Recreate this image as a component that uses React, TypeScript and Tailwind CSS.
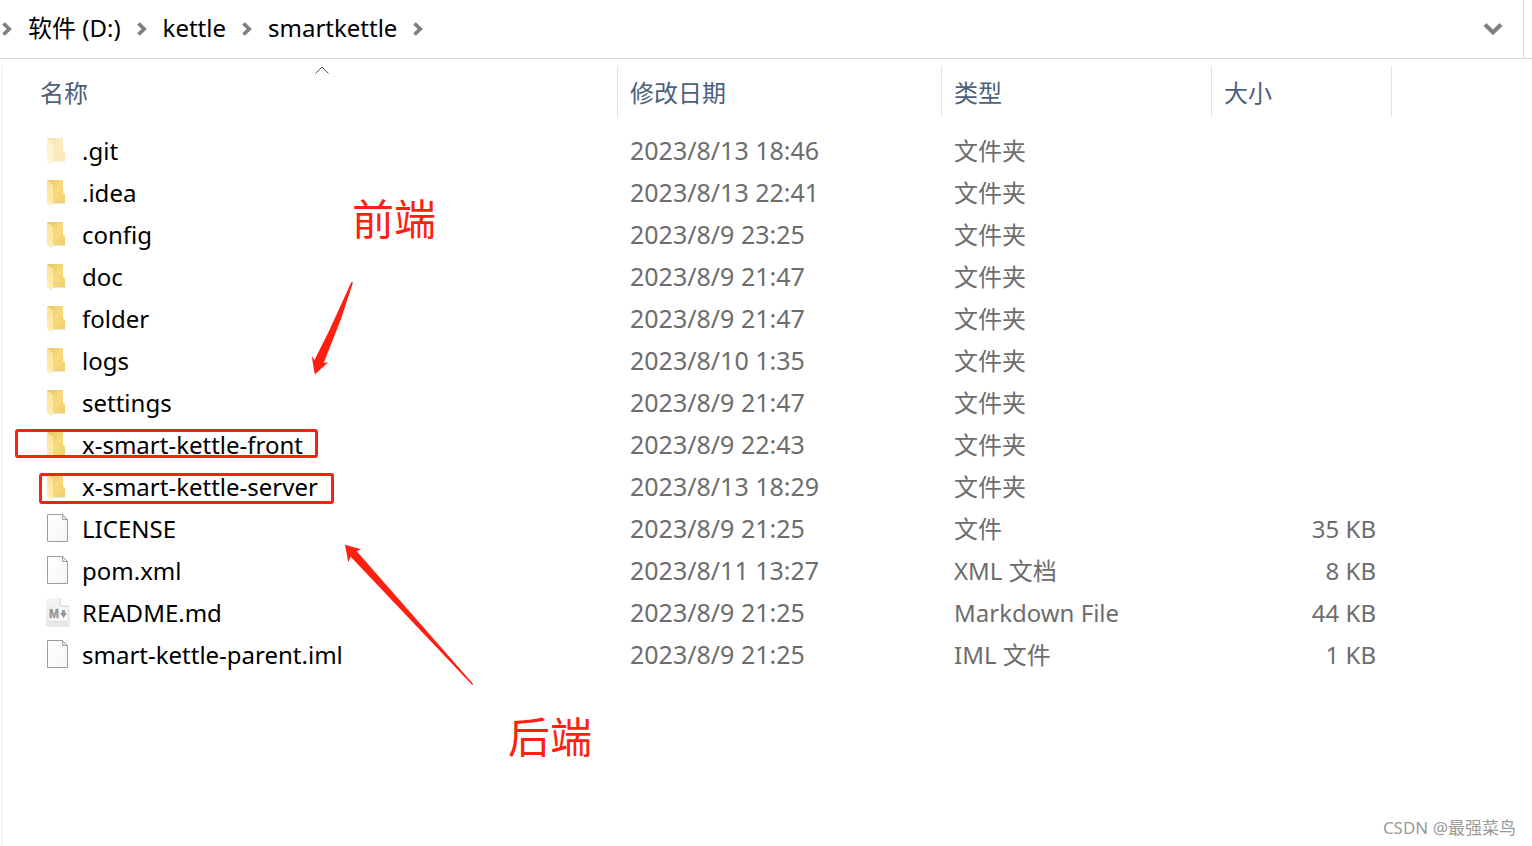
import React from 'react';

type IconKind = 'hidden-folder' | 'folder' | 'file' | 'markdown';

interface Entry {
  name: string;
  date: string;
  type: string;
  size?: string;
  icon: IconKind;
}

const PATH = ['软件 (D:)', 'kettle', 'smartkettle'];

const ENTRIES: Entry[] = [
  { name: '.git', date: '2023/8/13 18:46', type: '文件夹', icon: 'hidden-folder' },
  { name: '.idea', date: '2023/8/13 22:41', type: '文件夹', icon: 'folder' },
  { name: 'config', date: '2023/8/9 23:25', type: '文件夹', icon: 'folder' },
  { name: 'doc', date: '2023/8/9 21:47', type: '文件夹', icon: 'folder' },
  { name: 'folder', date: '2023/8/9 21:47', type: '文件夹', icon: 'folder' },
  { name: 'logs', date: '2023/8/10 1:35', type: '文件夹', icon: 'folder' },
  { name: 'settings', date: '2023/8/9 21:47', type: '文件夹', icon: 'folder' },
  { name: 'x-smart-kettle-front', date: '2023/8/9 22:43', type: '文件夹', icon: 'folder' },
  { name: 'x-smart-kettle-server', date: '2023/8/13 18:29', type: '文件夹', icon: 'folder' },
  { name: 'LICENSE', date: '2023/8/9 21:25', type: '文件', size: '35 KB', icon: 'file' },
  { name: 'pom.xml', date: '2023/8/11 13:27', type: 'XML 文档', size: '8 KB', icon: 'file' },
  { name: 'README.md', date: '2023/8/9 21:25', type: 'Markdown File', size: '44 KB', icon: 'markdown' },
  { name: 'smart-kettle-parent.iml', date: '2023/8/9 21:25', type: 'IML 文件', size: '1 KB', icon: 'file' }
];

const Chevron = () => (
  <svg viewBox="0 0 10 14" className="w-[10px] h-[14px] shrink-0" fill="none" stroke="#808080" strokeWidth="3.8" aria-hidden="true">
    <path d="M1.5 1.5 L7.2 7 L1.5 12.5" />
  </svg>
);

const FolderIcon = ({ faded }: { faded?: boolean }) => (
  <svg viewBox="0 0 24 30" className={`w-6 h-[30px] shrink-0 ${faded ? 'opacity-50' : ''}`} aria-hidden="true">
    <defs>
      <linearGradient id="folder-back" x1="0" y1="0" x2="1" y2="1">
        <stop offset="0" stopColor="#e9c45c" />
        <stop offset="0.5" stopColor="#f8da82" />
        <stop offset="1" stopColor="#f3ce69" />
      </linearGradient>
      <linearGradient id="folder-front" x1="0" y1="0" x2="0" y2="1">
        <stop offset="0" stopColor="#fce395" />
        <stop offset="1" stopColor="#ffedb3" />
      </linearGradient>
    </defs>
    <path d="M6 25 H20 L18 26 H6 Z" fill="#e6e6e6" />
    <path d="M1 2 H17 V15 H18 L19 17 V25 H1 Z" fill="url(#folder-back)" />
    <path d="M1 2 L7 7 V25 H6 V29 L1 25 Z" fill="url(#folder-front)" />
  </svg>
);

const FileIcon = () => (
  <svg viewBox="0 0 24 30" className="w-6 h-[30px] shrink-0" aria-hidden="true">
    <defs>
      <linearGradient id="sheet" x1="0" y1="0" x2="1" y2="1">
        <stop offset="0" stopColor="#ffffff" />
        <stop offset="1" stopColor="#f4f6f7" />
      </linearGradient>
    </defs>
    <path d="M1.5 0.5 H16.5 L21.5 5.5 V27.5 H1.5 Z" fill="url(#sheet)" stroke="#9a9c9e" />
    <path d="M16.5 0.5 V5.5 H21.5 Z" fill="#e9ecee" stroke="#9a9c9e" />
  </svg>
);

const MarkdownIcon = () => (
  <svg viewBox="0 0 24 30" className="w-6 h-[30px] shrink-0" aria-hidden="true">
    <defs>
      <linearGradient id="md-sheet" x1="0" y1="0" x2="0" y2="1">
        <stop offset="0" stopColor="#f6f6f6" />
        <stop offset="1" stopColor="#e6e6e6" />
      </linearGradient>
    </defs>
    <path d="M0 2 Q0 0 2 0 H14 L24 8 V27 Q24 29 22 29 H2 Q0 29 0 27 Z" fill="url(#md-sheet)" />
    <path d="M14 0 L23 8 H16 Q14 8 14 6 Z" fill="#ffffff" />
    <path d="M14 0 V6 Q14 8 16 8 H23" fill="none" stroke="#d0d0d0" />
    <rect x="3" y="10" width="18" height="14" fill="#f8f8f8" />
    <path d="M3 23.5 H21" stroke="#dcdcdc" />
    <text x="3" y="20" fontSize="12" fontWeight="700" fill="#969696" stroke="#969696" strokeWidth="0.4" fontFamily="Liberation Sans, sans-serif">M</text>
    <path d="M16 12 H19 V15 H21 L17.5 20 L14 15 H16 Z" fill="#969696" />
  </svg>
);

const EntryIcon = ({ kind }: { kind: IconKind }) => {
  if (kind === 'file') return <FileIcon />;
  if (kind === 'markdown') return <MarkdownIcon />;
  return <FolderIcon faded={kind === 'hidden-folder'} />;
};

const AddressBar = () => (
  <header className="flex h-[59px] border-b border-[#d9d9d9]">
    <div className="flex flex-1 items-center justify-between border-r border-[#d9d9d9] pl-0.5 pr-5">
      <nav aria-label="路径" className="flex items-center gap-4">
        <Chevron />
        {PATH.map(part => (
          <React.Fragment key={part}>
            <a href="#" className="whitespace-nowrap pb-0.5 text-black">{part}</a>
            <Chevron />
          </React.Fragment>
        ))}
      </nav>
      <button type="button" aria-label="以前的位置">
        <svg viewBox="0 0 20 14" className="w-5 h-[14px]" fill="none" stroke="#808080" strokeWidth="4">
          <path d="M2 2.5 L10 10.5 L18 2.5" />
        </svg>
      </button>
    </div>
    <div className="w-2" />
  </header>
);

const HEAD = 'h-[51px] border-r border-[#e2e2e2] pt-0.5 text-left font-normal text-[#4c607a]';

const FileTable = () => (
  <table className="w-full table-fixed border-separate border-spacing-0">
    <colgroup>
      <col className="w-[591px]" />
      <col className="w-[324px]" />
      <col className="w-[270px]" />
      <col className="w-[180px]" />
      <col />
    </colgroup>
    <thead>
      <tr>
        <th scope="col" aria-sort="ascending" className={`${HEAD} relative pl-[13px]`}>
          <svg viewBox="0 0 14 8" className="absolute left-1/2 top-0 w-[14px] h-2 -translate-x-1/2" fill="none" stroke="#555555" aria-hidden="true">
            <path d="M0.5 7.5 L7 1 L13.5 7.5" />
          </svg>
          名称
        </th>
        <th scope="col" className={`${HEAD} pl-3`}>修改日期</th>
        <th scope="col" className={`${HEAD} pl-3`}>类型</th>
        <th scope="col" className={`${HEAD} pl-3`}>大小</th>
        <td />
      </tr>
    </thead>
    <tbody className="text-[#6d6d6d] before:block before:h-[13px]">
      {ENTRIES.map(entry => (
        <tr key={entry.name} className="h-[42px] whitespace-nowrap">
          <td className="pl-[19px]">
            <div className="flex items-center gap-3 text-black">
              <EntryIcon kind={entry.icon} />
              {entry.name}
            </div>
          </td>
          <td className="pb-0.5 pl-3 text-[25px]">{entry.date}</td>
          <td className="pl-3">{entry.type}</td>
          <td className="pr-4 text-right">{entry.size}</td>
          <td />
        </tr>
      ))}
    </tbody>
  </table>
);

// Red marks drawn over the list
const Annotations = () => (
  <div className="pointer-events-none absolute inset-0 text-[42px] leading-[48px] text-[#ff1f10]">
    <div className="absolute left-[15px] top-[370px] h-[29px] w-[303px] rounded-[3px] border-3 border-[#ff1f10]" />
    <div className="absolute left-[39px] top-[414px] h-[31px] w-[295px] rounded-[3px] border-3 border-[#ff1f10]" />
    <span className="absolute left-[352px] top-[136px]">前端</span>
    <span className="absolute left-[508px] top-[654px]">后端</span>
    <svg viewBox="0 0 44 96" className="absolute left-[310px] top-[221px] h-24 w-11" fill="#ff1f10" aria-hidden="true">
      <path d="M41.4 2 L43 2.4 L31 39 L13.7 83 L18.2 82.3 L4.8 94.5 L1.7 76 L4.5 80 L19 51 Z" />
    </svg>
    <svg viewBox="0 0 132 144" className="absolute left-[343px] top-[484px] h-36 w-[132px]" fill="#ff1f10" aria-hidden="true">
      <path d="M2 1.7 L18 6.3 L13.7 8.3 L130.2 141 L129.2 142 L7.7 13.7 L5.3 19.3 Z" />
    </svg>
  </div>
);

export default function App() {
  return (
    <div className="flex min-h-screen flex-col bg-white text-[24px] leading-8 font-['Noto_Sans','Noto_Sans_CJK_SC',sans-serif]">
      <AddressBar />
      <main className="relative flex flex-1 flex-col pl-px pt-[7px]">
        <div className="flex-1 border-l-2 border-[#f5f5f5] pl-6">
          <FileTable />
        </div>
        <Annotations />
        <footer className="absolute bottom-1 right-4 text-[17px] leading-7 text-[#9a9a9a]">CSDN @最强菜鸟</footer>
      </main>
    </div>
  );
}
